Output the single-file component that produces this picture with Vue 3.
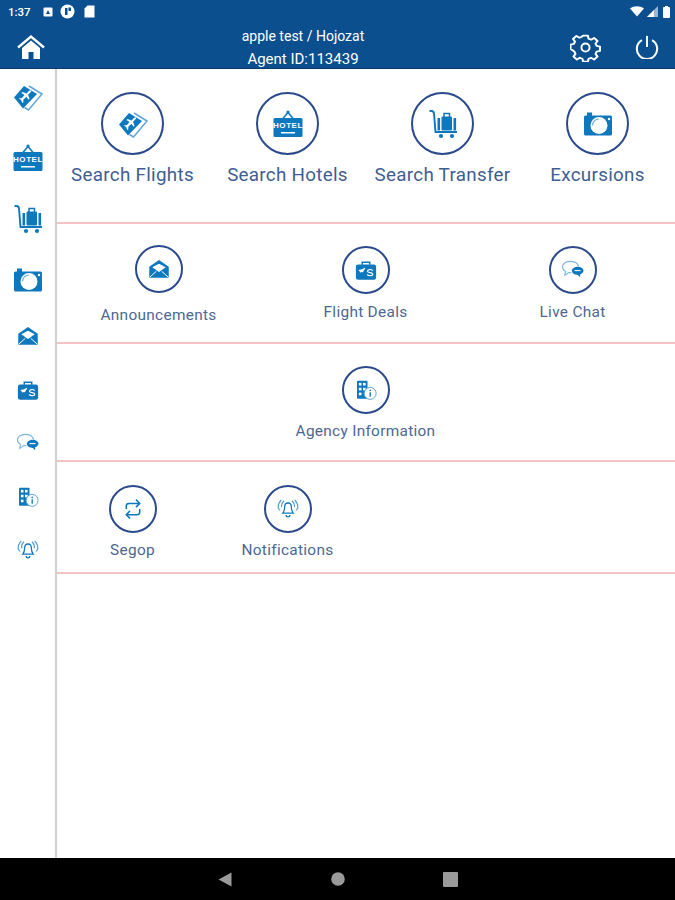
<script setup>
const sideIcons = [
  { id: "flight", big: true },
  { id: "hotel", big: true },
  { id: "cart", big: true },
  { id: "camera", big: true },
  { id: "mail" },
  { id: "case" },
  { id: "chat" },
  { id: "info" },
  { id: "bell" },
];

const rows = [
  {
    cls: "row-main",
    items: [
      { label: "Search Flights", icon: "flight" },
      { label: "Search Hotels", icon: "hotel" },
      { label: "Search Transfer", icon: "cart" },
      { label: "Excursions", icon: "camera" },
    ],
  },
  {
    cls: "row-sub",
    items: [
      { label: "Announcements", icon: "mail", cls: "lowered" },
      { label: "Flight Deals", icon: "case" },
      { label: "Live Chat", icon: "chat" },
    ],
  },
  {
    cls: "row-agency",
    items: [{}, { label: "Agency Information", icon: "info" }, {}],
  },
  {
    cls: "row-last",
    items: [
      { label: "Segop", icon: "repeat" },
      { label: "Notifications", icon: "bell" },
      {},
      {},
    ],
  },
];
</script>

<template>
  <div class="screen">
    <svg class="defs" aria-hidden="true">
      <symbol id="flight" viewBox="0 0 32 32">
        <path d="M17 5l13 8-13.5 16-4-2.5" fill="none" stroke="#5da6d8" stroke-width="1.5" />
        <path d="M2 16.5L12 5l13 8L11 27.5z" fill="#0e78bf" />
        <path d="M7 17.5l3-.5 2.5-3-3-2 1-1 4 1.5 3-3c1-.8 2.3.3 1.5 1.3l-3 3 1.5 4-1 1-2-3-3 2.7-.3 3-1 .5-1-3-2.7-1.5z" fill="#fff" />
      </symbol>
      <symbol id="hotel" viewBox="0 0 32 32">
        <path d="M10.5 11L16 4.5 21.5 11" fill="none" stroke="#0e78bf" stroke-width="1.5" />
        <circle cx="16" cy="4" r="1.6" fill="#0e78bf" />
        <rect x="1.5" y="10" width="29" height="19" rx="1.5" fill="#0e78bf" />
        <text x="16" y="20" text-anchor="middle" class="hotel-word">HOTEL</text>
        <rect x="9" y="24" width="14" height="1.5" fill="#fff" />
      </symbol>
      <symbol id="cart" viewBox="0 0 32 32">
        <path d="M2.5 3h2c1.5 0 2.3 1 2.500 2.500L8.500 24H30" fill="none" stroke="#0e78bf" stroke-width="1.9" />
        <circle cx="14" cy="28" r="2.1" fill="#0e78bf" />
        <circle cx="25" cy="28" r="2.1" fill="#0e78bf" />
        <rect x="10.5" y="10" width="2.6" height="12.5" fill="#0e78bf" />
        <rect x="26.5" y="10" width="2.6" height="12.5" fill="#0e78bf" />
        <rect x="14.5" y="8.5" width="10.5" height="14" rx="1" fill="#0e78bf" />
        <path d="M17 9V5.5h5.5V9" fill="none" stroke="#0e78bf" stroke-width="1.5" />
      </symbol>
      <symbol id="camera" viewBox="0 0 32 32">
        <rect x="5" y="4.5" width="5" height="4" fill="#0e78bf" />
        <rect x="2" y="7.5" width="28" height="20" rx="1.5" fill="#0e78bf" />
        <circle cx="17" cy="17.5" r="8.5" fill="#fff" />
        <path d="M10.5 17.5a6.5 6.5 0 0 1 6.5-6.5" fill="none" stroke="#6fb0dc" stroke-width="1.2" />
        <circle cx="27" cy="11" r="1.2" fill="#fff" />
      </symbol>
      <symbol id="mail" viewBox="0 0 32 32">
        <path d="M3 13L16 4l13 9v14.5H3z" fill="#0e78bf" />
        <path d="M7 13.5l9-4.5 9 4.5-9 6.5z" fill="#fff" />
        <path d="M3.5 27l9-8M28.5 27l-9-8" stroke="#fff" stroke-width="1.3" />
      </symbol>
      <symbol id="case" viewBox="0 0 32 32">
        <path d="M11 9V5.5h10V9" fill="none" stroke="#0e78bf" stroke-width="2" />
        <rect x="2.5" y="8.5" width="27" height="20.5" rx="3" fill="#0e78bf" />
        <path d="M6 16l5-1 3-2 1 1-2 2.5-1 2.5-2-.5-1 1-1.5-1.5z" fill="#fff" />
        <path d="M25 17c-2-2.500-7-2-7 .5s7 1.500 7 4-5 3-7.500.5" fill="none" stroke="#fff" stroke-width="1.6" />
      </symbol>
      <symbol id="chat" viewBox="0 0 32 32">
        <path d="M12 4.5c-5.500 0-10 3.300-10 7.500 0 2.500 1.500 4.600 4 6l-1 5 5.500-3.500c1.500.2 2.500.2 3.500 0" fill="none" stroke="#7db6de" stroke-width="1.5" />
        <path d="M12 4.5c5.500 0 10 2 11.500 6.500" fill="none" stroke="#7db6de" stroke-width="1.5" />
        <path d="M22.5 11.5c-4.500 0-8 2.500-8 5.500s3.500 5.500 8 5.500l3 3v-3.700c2.500-1 4.500-2.800 4.500-4.800 0-3-3.500-5.500-7.500-5.500z" fill="#0e78bf" />
        <rect x="18" y="16" width="8" height="1.5" fill="#fff" />
      </symbol>
      <symbol id="info" viewBox="0 0 32 32">
        <rect x="4" y="3.5" width="14" height="24" rx="1" fill="#0e78bf" />
        <g fill="#fff">
          <rect x="6.5" y="6.5" width="3.5" height="3.5" />
          <rect x="12" y="6.5" width="3.5" height="3.5" />
          <rect x="6.5" y="13" width="3.5" height="3.5" />
          <rect x="12" y="13" width="3.5" height="3.5" />
          <rect x="6.5" y="19.5" width="3.5" height="3.5" />
        </g>
        <circle cx="21.5" cy="20.5" r="8" fill="#fff" stroke="#4f9dd4" stroke-width="1.2" />
        <rect x="20.7" y="19" width="1.8" height="6" fill="#0e78bf" />
        <circle cx="21.6" cy="16.5" r="1.1" fill="#0e78bf" />
      </symbol>
      <symbol id="bell" viewBox="0 0 32 32">
        <path d="M16 8c-3 0-4.500 2.200-4.500 5.500 0 4-1 6-2.500 8h14c-1.500-2-2.500-4-2.500-8C20.500 10.200 19 8 16 8z" fill="none" stroke="#0e78bf" stroke-width="1.7" />
        <path d="M13.5 24a2.500 2.500 0 0 0 5 0" fill="none" stroke="#0e78bf" stroke-width="1.7" />
        <path d="M7 4C4 7 2.500 10 3 15l2.500 3M10.5 5C8 7.500 7 10 7.500 13.500M25 4c3 3 4.500 6 4 11l-2.500 3M21.500 5c2.500 2.500 3.500 5 3 8.500" fill="none" stroke="#4f9dd4" stroke-width="1.5" />
      </symbol>
      <symbol id="repeat" viewBox="0 0 32 32">
        <path d="M7 16v-4c0-2 1.500-3.500 3.500-3.500H24" fill="none" stroke="#0e78bf" stroke-width="2" />
        <path d="M20 3.500l5 5-5 5" fill="none" stroke="#0e78bf" stroke-width="2" />
        <path d="M25 16v4c0 2-1.500 3.500-3.500 3.500H8" fill="none" stroke="#0e78bf" stroke-width="2" />
        <path d="M12 18.500l-5 5 5 5" fill="none" stroke="#0e78bf" stroke-width="2" />
      </symbol>
    </svg>

    <header class="top">
      <div class="status">
        <span class="time">1:37</span>
        <svg class="st" width="10" height="10" viewBox="0 0 10 10">
          <rect x="0.5" y="0.5" width="9" height="9" rx="1" fill="#fff" />
          <path d="M3 7l2-4 2 4z" fill="#0b4f8f" />
        </svg>
        <svg class="st st-wide" width="15" height="15" viewBox="0 0 15 15">
          <circle cx="7.5" cy="7.5" r="7" fill="#fff" />
          <rect x="5" y="4" width="2.5" height="7" fill="#0b4f8f" />
          <rect x="8.5" y="3.5" width="2.5" height="3.5" fill="#0b4f8f" />
        </svg>
        <svg class="st" width="11" height="13" viewBox="0 0 11 13">
          <path d="M3.5 0.5H10.5V12.5H0.5V3.5z" fill="#fff" />
        </svg>
        <span class="grow"></span>
        <svg width="14" height="11" viewBox="0 0 14 11">
          <path d="M0 2.500C4 -.5 10 -.5 14 2.500L7 10.500z" fill="#fff" />
        </svg>
        <svg class="signal" width="11" height="11" viewBox="0 0 11 11">
          <path d="M0 11L11 0v11z" fill="#9db6cf" />
          <path d="M0 11L7 4v7z" fill="#fff" />
        </svg>
        <svg class="battery" width="7" height="12" viewBox="0 0 7 12">
          <rect x="0" y="1" width="7" height="11" rx="1" fill="#fff" />
          <rect x="2" y="0" width="3" height="1.5" fill="#fff" />
        </svg>
      </div>
      <div class="bar">
        <svg class="home" width="28" height="25" viewBox="0 0 28 25">
          <path d="M1 12.500L14 1.500l13 11" fill="none" stroke="#fff" stroke-width="2.3" />
          <path d="M5 13L14 5.500 23 13v11h-6.500v-7h-5v7H5z" fill="#fff" />
        </svg>
        <div class="title">
          <div class="title-name">apple test / Hojozat</div>
          <div class="title-id">Agent ID:113439</div>
        </div>
        <span></span>
        <svg class="tool" width="31" height="29" viewBox="0 0 32 30">
          <path d="M13.5 2h5l.7 3.600 2.600 1.100 3.100-2 3.500 3.500-2 3 1.100 2.700 3.500.7v5l-3.500.7-1.100 2.700 2 3-3.500 3.500-3.100-2-2.600 1.100-.7 3.300h-5l-.7-3.300-2.600-1.100-3.100 2-3.500-3.500 2-3-1.100-2.700L.5 17.300v-5l3.500-.7 1.100-2.700-2-3 3.500-3.500 3.100 2 2.600-1.100z" transform="scale(1 .9) translate(0 1)" fill="none" stroke="#fff" stroke-width="2.1" stroke-linejoin="round" />
          <circle cx="16" cy="15" r="4.2" fill="none" stroke="#fff" stroke-width="2" />
        </svg>
        <svg class="tool" width="24" height="24" viewBox="0 0 26 26">
          <path d="M7.5 5.500a11 11 0 1 0 11 0" fill="none" stroke="#fff" stroke-width="2.2" />
          <path d="M13 1v12" stroke="#fff" stroke-width="2.2" />
        </svg>
      </div>
    </header>

    <div class="body">
      <aside class="side">
        <div v-for="s in sideIcons" :key="s.id" class="side-item">
          <svg :class="s.big ? 'ic-big' : 'ic-small'"><use :href="'#' + s.id" /></svg>
        </div>
      </aside>

      <main class="content">
        <section v-for="row in rows" :key="row.cls" class="row" :class="row.cls">
          <div
            v-for="(item, i) in row.items"
            :key="i"
            class="cell"
            :class="item.cls"
          >
            <template v-if="item.label">
              <div class="ring">
                <svg><use :href="'#' + item.icon" /></svg>
              </div>
              <div class="label">{{ item.label }}</div>
            </template>
          </div>
        </section>
      </main>
    </div>

    <footer class="nav">
      <svg width="14" height="15" viewBox="0 0 14 15"><path d="M0.5 7.500L13.5 0.5v14z" fill="#9a9a9a" /></svg>
      <svg width="14" height="14" viewBox="0 0 14 14"><circle cx="7" cy="7" r="6.8" fill="#9a9a9a" /></svg>
      <svg width="15" height="15" viewBox="0 0 14 14"><rect width="14" height="14" rx="1" fill="#9a9a9a" /></svg>
    </footer>
  </div>
</template>

<style>
html,
body {
  margin: 0;
  overflow: hidden;
}
</style>

<style scoped>
.screen {
  width: 675px;
  height: 900px;
  display: flex;
  flex-direction: column;
  background: #fff;
  font-family: Roboto, "Liberation Sans", sans-serif;
}

.defs {
  display: none;
}

.hotel-word {
  font-family: "Liberation Sans", sans-serif;
  font-size: 8px;
  font-weight: 700;
  letter-spacing: 0.6px;
  fill: #fff;
}

.top {
  height: 69px;
  box-sizing: border-box;
  background: #0b4f8f;
  border-bottom: 1px solid #0a3a72;
  color: #fff;
}

.status {
  height: 23px;
  display: flex;
  align-items: center;
  padding: 0 5px 0 8px;
  font-size: 11.5px;
  font-weight: 500;
}

.time {
  width: 35px;
}

.st {
  margin-right: 7px;
}

.st-wide {
  margin-right: 9px;
}

.grow {
  flex: 1;
}

.signal {
  margin-left: 3px;
}

.battery {
  margin-left: 5px;
}

.bar {
  height: 45px;
  display: grid;
  grid-template-columns: 62px 482px 1fr 68px 56px;
  align-items: center;
  justify-items: center;
}

.home {
  margin-left: -1px;
}

.title {
  text-align: center;
}

.title-name {
  font-size: 14px;
  line-height: 21px;
  margin-top: 3px;
}

.title-id {
  font-size: 15px;
  line-height: 24px;
}

.body {
  flex: 1;
  display: flex;
  min-height: 0;
}

.side {
  position: relative;
  z-index: 1;
  width: 55px;
  flex: none;
  background: #fff;
  border-right: 2px solid #cfcfcf;
  padding-top: 6px;
}

.side-item {
  height: 44px;
  display: flex;
  align-items: center;
  justify-content: center;
  margin-bottom: 17px;
}

.side-item:nth-child(n + 4) {
  margin-bottom: 12px;
}

.side-item:nth-child(n + 5) {
  margin-bottom: 9.5px;
}

.ic-big {
  width: 32px;
  height: 32px;
}

.ic-small {
  width: 24px;
  height: 24px;
}

.content {
  flex: 1;
  margin-left: -2px;
}

.row {
  display: grid;
  box-sizing: border-box;
  border-bottom: 2px solid #f4c2c2;
}

.row-main,
.row-last {
  grid-template-columns: repeat(4, 155px);
}

.row-sub,
.row-agency {
  grid-template-columns: repeat(3, 207px);
}

.row-main {
  height: 155px;
  padding-top: 23px;
}

.row-sub {
  height: 120px;
  padding-top: 22px;
}

.row-agency {
  height: 118px;
  padding-top: 22px;
}

.row-last {
  height: 112px;
  padding-top: 23px;
}

.cell {
  display: flex;
  flex-direction: column;
  align-items: center;
}

.ring {
  width: 48px;
  height: 48px;
  box-sizing: border-box;
  border: 2px solid #2b4a8c;
  border-radius: 50%;
  display: flex;
  align-items: center;
  justify-content: center;
}

.ring svg {
  width: 24px;
  height: 24px;
}

.label {
  margin-top: 9px;
  font-size: 15.4px;
  line-height: 18px;
  letter-spacing: 0.3px;
  color: #4d6793;
  white-space: nowrap;
}

.row-agency .label,
.row-last .label {
  margin-top: 8px;
}

.row-main .ring {
  width: 63px;
  height: 63px;
}

.row-main .ring svg {
  width: 32px;
  height: 32px;
}

.row-main .label {
  margin-top: 9px;
  font-size: 18.8px;
  line-height: 22px;
  color: #3f5e90;
}

.lowered {
  margin-top: -1px;
}

.lowered .label {
  margin-top: 13px;
}

.nav {
  height: 42px;
  flex: none;
  background: #000;
  display: flex;
  align-items: center;
  box-sizing: border-box;
  padding: 0 217px 0 218px;
  justify-content: space-between;
}
</style>
